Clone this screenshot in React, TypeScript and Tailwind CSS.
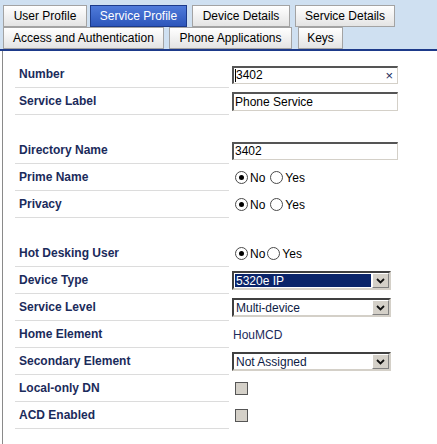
const Tab = ({ label, w, active = false }: { label: string; w: string; active?: boolean }) => (
  <div
    className={
      active
        ? `${w} h-[22px] flex items-center justify-center border border-[#1c3a8a] bg-gradient-to-b from-[#4f7bdb] to-[#2d56bb] text-white`
        : `${w} h-[22px] flex items-center justify-center border border-[#a3a3a3] bg-gradient-to-b from-white to-[#e4e4e4] text-black`
    }
  >
    {label}
  </div>
);

const Row = ({ label, children, gapTop = false }: { label: string; children?: React.ReactNode; gapTop?: boolean }) => (
  <div className={`flex items-center h-[27px] ${gapTop ? 'mt-[22px]' : ''}`}>
    <div className="w-[214px] h-[27px] border-b border-[#dcdcdc] flex items-center pl-[4px] font-bold text-[#1b2b5b]">
      {label}
    </div>
    <div className="ml-[3px] flex items-center">{children}</div>
  </div>
);

const TextBox = ({ value, h = 'h-[19px]', clear = false, caret = false }: { value: string; h?: string; clear?: boolean; caret?: boolean }) => (
  <div className={`w-[166px] ${h} flex items-center border-t-2 border-l-2 border-[#555555] border-b border-r border-b-[#d4d0c8] border-r-[#d4d0c8] bg-white pl-[1px] text-black relative`}>
    {caret && <span className="w-px h-[13px] bg-black"></span>}
    <span>{value}</span>
    {clear && <span className="absolute right-[4px] top-[0px] text-[13px] leading-[16px] text-[#1b2b5b]">×</span>}
  </div>
);

const Chevron = () => (
  <svg width="9" height="6" viewBox="0 0 9 6">
    <path d="M1 1 L4.5 4.5 L8 1" fill="none" stroke="#111" strokeWidth="1.8" />
  </svg>
);

const Select = ({ value, selected = false }: { value: string; selected?: boolean }) => (
  <div className="w-[159px] h-[19px] flex border-t-2 border-l-2 border-[#404040] border-b-2 border-r-2 border-b-[#d4d0c8] border-r-[#d4d0c8] bg-white">
    <div className="flex-1 p-[1px] flex">
      <div className={selected ? 'flex-1 flex items-center pl-[1px] bg-[#0a246a] text-white' : 'flex-1 flex items-center pl-[1px] text-[#0d1b45]'}>
        {value}
      </div>
    </div>
    <div className="w-[17px] flex items-center justify-center bg-[#d4d0c8] border-t border-l border-white border-r border-b border-r-[#808080] border-b-[#808080]">
      <Chevron />
    </div>
  </div>
);

const Radio = ({ checked = false }: { checked?: boolean }) => (
  <span className="w-[13px] h-[13px] rounded-full border border-[#4a4a4a] bg-white flex items-center justify-center">
    {checked && <span className="w-[5px] h-[5px] rounded-full bg-black"></span>}
  </span>
);

const NoYes = ({ tight = false }: { tight?: boolean }) => (
  <div className="flex items-center pl-[3px] text-black">
    <Radio checked />
    <span className={tight ? 'ml-[2px] mr-[2px]' : 'ml-[2px] mr-[5px]'}>No</span>
    <Radio />
    <span className="ml-[2px]">Yes</span>
  </div>
);

const Check = () => (
  <span className="ml-[3px] w-[13px] h-[13px] border border-[#555555] bg-[#d4d0c8] block"></span>
);

export default function App() {
  return (
    <div className="w-[437px] h-[444px] bg-white overflow-hidden font-['Liberation_Sans',Arial,sans-serif] text-[12px]">
      <div className="bg-[#cfe0f1] pt-[5px] pl-[3px] border-b-2 border-[#1d3a8a]">
        <div className="flex">
          <Tab label="User Profile" w="w-[84px]" />
          <div className="w-[3px]"></div>
          <Tab label="Service Profile" w="w-[97px]" active />
          <div className="w-[5px]"></div>
          <Tab label="Device Details" w="w-[98px]" />
          <div className="w-[5px]"></div>
          <Tab label="Service Details" w="w-[100px]" />
        </div>
        <div className="flex">
          <Tab label="Access and Authentication" w="w-[161px]" />
          <div className="w-[5px]"></div>
          <Tab label="Phone Applications" w="w-[123px]" />
          <div className="w-[6px]"></div>
          <Tab label="Keys" w="w-[45px]" />
        </div>
      </div>
      <div className="ml-[2px] border-l border-[#8a8a8a] h-full pt-[10px] pl-[12px]">
        <Row label="Number">
          <TextBox value="3402" h="h-[18px]" clear caret />
        </Row>
        <Row label="Service Label">
          <TextBox value="Phone Service" />
        </Row>
        <Row label="Directory Name" gapTop>
          <TextBox value="3402" h="h-[18px]" />
        </Row>
        <Row label="Prime Name">
          <NoYes />
        </Row>
        <Row label="Privacy">
          <NoYes />
        </Row>
        <Row label="Hot Desking User" gapTop>
          <NoYes tight />
        </Row>
        <Row label="Device Type">
          <Select value="5320e IP" selected />
        </Row>
        <Row label="Service Level">
          <Select value="Multi-device" />
        </Row>
        <Row label="Home Element">
          <span className="pl-[1px] text-[#1b2b5b]">HouMCD</span>
        </Row>
        <Row label="Secondary Element">
          <Select value="Not Assigned" />
        </Row>
        <Row label="Local-only DN">
          <Check />
        </Row>
        <Row label="ACD Enabled">
          <Check />
        </Row>
      </div>
    </div>
  );
}
